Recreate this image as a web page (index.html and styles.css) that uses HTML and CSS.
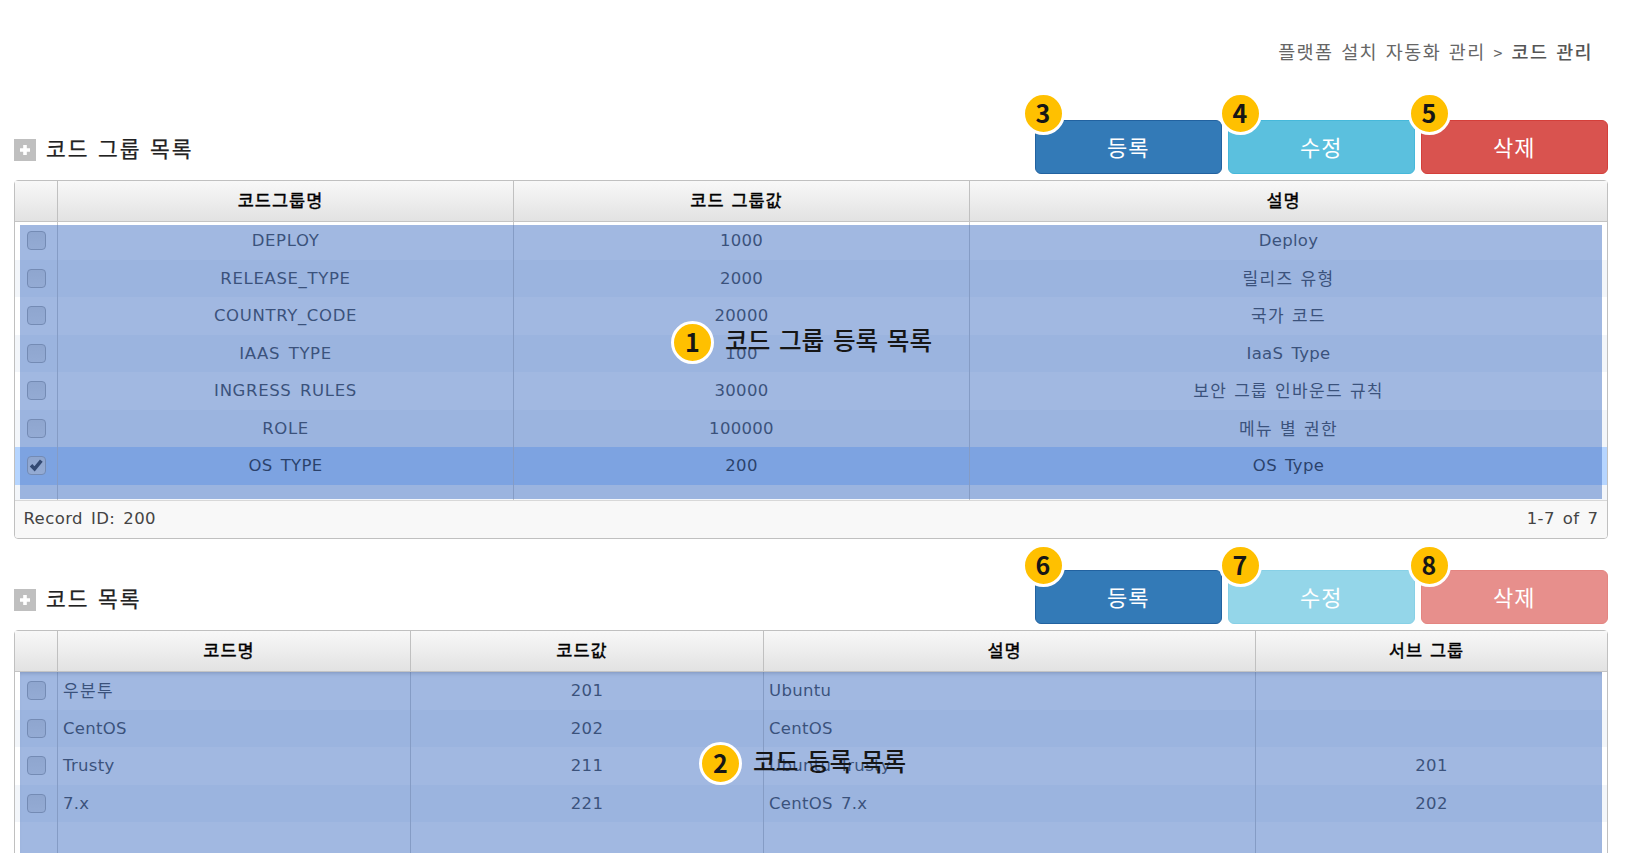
FILE: index.html
```html
<!DOCTYPE html>
<html lang="ko">
<head>
<meta charset="utf-8">
<title>코드 관리</title>
<link rel="stylesheet" href="styles.css">
</head>
<body>
<div class="page">
  <nav class="crumb">플랫폼 설치 자동화 관리 <span class="gt">&gt;</span> <b>코드 관리</b></nav>

  <section class="block">
    <header class="bar">
      <svg class="plus" viewBox="0 0 22 22"><rect width="22" height="22" fill="#bfbfbf"/><path d="M11 6v10M6 11h10" stroke="#fff" stroke-width="3.6"/></svg>
      <h2>코드 그룹 목록</h2>
      <div class="btns">
        <div class="btn blue">등록<i class="badge">3</i></div>
        <div class="btn cyan">수정<i class="badge">4</i></div>
        <div class="btn red">삭제<i class="badge">5</i></div>
      </div>
    </header>
    <div class="grid groups">
      <div class="row head"><span></span><span>코드그룹명</span><span>코드 그룹값</span><span>설명</span></div>
      <div class="body">
        <div class="row"><span><i class="check"></i></span><span class="caps">DEPLOY</span><span>1000</span><span>Deploy</span></div>
        <div class="row"><span><i class="check"></i></span><span class="caps">RELEASE_TYPE</span><span>2000</span><span class="ko">릴리즈 유형</span></div>
        <div class="row"><span><i class="check"></i></span><span class="caps">COUNTRY_CODE</span><span>20000</span><span class="ko">국가 코드</span></div>
        <div class="row"><span><i class="check"></i></span><span class="caps">IAAS TYPE</span><span>100</span><span>IaaS Type</span></div>
        <div class="row"><span><i class="check"></i></span><span class="caps">INGRESS RULES</span><span>30000</span><span class="ko">보안 그룹 인바운드 규칙</span></div>
        <div class="row"><span><i class="check"></i></span><span class="caps">ROLE</span><span>100000</span><span class="ko">메뉴 별 권한</span></div>
        <div class="row selected"><span><i class="check"><svg viewBox="0 0 18 18"><path d="M3.4 9.4l4 4L15 4.2" fill="none" stroke="#222" stroke-width="4"/></svg></i></span><span>OS TYPE</span><span>200</span><span>OS Type</span></div>
        <div class="row rest"><span></span><span></span><span></span><span></span></div>
        <div class="tint"></div>
      </div>
      <footer class="foot"><span>Record ID: 200</span><span>1-7 of 7</span></footer>
      <div class="note note-groups"><i class="badge">1</i><span>코드 그룹 등록 목록</span></div>
    </div>
  </section>

  <section class="block">
    <header class="bar">
      <svg class="plus" viewBox="0 0 22 22"><rect width="22" height="22" fill="#bfbfbf"/><path d="M11 6v10M6 11h10" stroke="#fff" stroke-width="3.6"/></svg>
      <h2>코드 목록</h2>
      <div class="btns">
        <div class="btn blue">등록<i class="badge">6</i></div>
        <div class="btn cyan off">수정<i class="badge">7</i></div>
        <div class="btn red off">삭제<i class="badge">8</i></div>
      </div>
    </header>
    <div class="grid codes">
      <div class="row head"><span></span><span>코드명</span><span>코드값</span><span>설명</span><span>서브 그룹</span></div>
      <div class="body">
        <div class="row"><span><i class="check"></i></span><span class="left ko">우분투</span><span>201</span><span class="left">Ubuntu</span><span></span></div>
        <div class="row"><span><i class="check"></i></span><span class="left">CentOS</span><span>202</span><span class="left">CentOS</span><span></span></div>
        <div class="row"><span><i class="check"></i></span><span class="left">Trusty</span><span>211</span><span class="left">Ubuntu Trusty</span><span>201</span></div>
        <div class="row"><span><i class="check"></i></span><span class="left">7.x</span><span>221</span><span class="left">CentOS 7.x</span><span>202</span></div>
        <div class="row rest"><span></span><span></span><span></span><span></span><span></span></div>
        <div class="tint"></div>
      </div>
      <div class="note note-codes"><i class="badge">2</i><span>코드 등록 목록</span></div>
    </div>
  </section>
</div>
</body>
</html>
```

FILE: styles.css
```css
* { box-sizing: border-box; }
body { margin: 0; background: #fff; }
i { font-style: normal; }

.page {
  height: 853px;
  overflow: hidden;
  padding: 35px 25px 0 14px;
  font-family: "DejaVu Sans", "Noto Sans CJK KR", sans-serif;
  font-size: 16.5px;
  color: #333;
}

.crumb {
  height: 33px;
  line-height: 32px;
  padding-right: 15px;
  text-align: right;
  font-family: "Noto Sans CJK KR", sans-serif;
  font-size: 18.5px;
  letter-spacing: 1.4px;
  word-spacing: 1.2px;
  color: #666;
}
.crumb b { font-weight: 500; color: #555; }
.gt { font-size: 16px; }

.block { height: 450px; padding-top: 52px; }
.block + .block { height: 400px; padding-top: 52px; }

.bar { display: flex; align-items: flex-start; height: 60px; }
.plus { width: 22px; height: 22px; margin-top: 19px; }
h2 {
  margin: 11px 0 0 10px;
  font: 400 21.5px/34px "Noto Sans CJK KR", sans-serif;
  letter-spacing: 2px;
  word-spacing: .4px;
  color: #222;
  -webkit-text-stroke: .25px #222;
}
.btns { display: flex; margin-left: auto; gap: 5.5px; }
.btn {
  position: relative;
  width: 187.5px;
  height: 54px;
  border: 1px solid;
  border-radius: 6px;
  color: #fff;
  text-align: center;
  font: 400 22px/50px "Noto Sans CJK KR", sans-serif;
  letter-spacing: 1px;
}
.blue { background: #337ab7; border-color: #2262a0; }
.cyan { background: #5bc0de; border-color: #46b8da; }
.red { background: #d9534f; border-color: #d43f3a; }
.cyan.off { background: #94d6e9; border-color: #87d0e6; }
.red.off { background: #e78f8c; border-color: #e48581; }

.badge {
  display: block;
  width: 43px;
  height: 43px;
  border: 3px solid #fff;
  border-radius: 50%;
  background: #ffc000;
  color: #161616;
  text-align: center;
  font: 700 25px/35px "Noto Sans CJK KR", sans-serif;
  letter-spacing: 0;
}
.btn .badge { position: absolute; left: -14px; top: -29px; }
.btn.cyan .badge { left: -10px; }
.btn.red .badge { left: -14px; }
.block + .block .btn .badge { top: -27px; }

.grid {
  position: relative;
  width: 1594px;
  border: 1.5px solid #c0c0c0;
  border-radius: 4px;
  background: #fff;
}
.groups { height: 359px; }
.codes { height: 400px; }
.row { display: grid; height: 37.5px; }
.groups .row { grid-template-columns: 43px 456px 456px 1fr; }
.codes .row { grid-template-columns: 43px 353px 353px 492px 1fr; }
.row > span {
  border-right: 1.5px solid #c6c6c6;
  text-align: center;
  line-height: 37px;
  letter-spacing: .3px;
  word-spacing: 2.6px;
  white-space: nowrap;
}
.row > .caps { letter-spacing: .65px; }
.row > span:last-child { border-right: 0; }
.row:nth-child(even) { background: #f3f6fa; }
.row.selected { background: #b6d5ff; color: #111; }
.row .left { text-align: left; padding-left: 5px; }
.row > .ko {
  font-family: "Noto Sans CJK KR", sans-serif;
  font-size: 17px;
  letter-spacing: 1.3px;
  word-spacing: 1px;
  line-height: 35px;
}
.row.head {
  height: 41px;
  background: linear-gradient(#f8f8f8, #e2e2e2);
  border-bottom: 1.5px solid #c4c4c4;
}
.head > span {
  padding-right: 10px;
  border-color: #c0c0c0;
  color: #000;
  font: 400 17.5px/37px "Noto Sans CJK KR", sans-serif;
  -webkit-text-stroke: .4px #000;
  letter-spacing: 1px;
  word-spacing: 1px;
}
.head > span:first-child { padding: 0; }

.body { position: relative; overflow: hidden; }
.groups .body { height: 278px; }
.codes .body { height: 350px; }
.row.rest { height: 200px; }
.tint {
  position: absolute;
  inset: 3px 5px 1px 5px;
  background: rgba(68, 114, 196, .5);
}
.codes .tint { top: 0; box-shadow: inset 0 4px 4px -3px rgba(60, 80, 120, .35); }

.check {
  display: block;
  width: 18.5px;
  height: 19px;
  margin: 9px 0 0 12px;
  border: 1.5px solid #a4a4a4;
  border-radius: 4px;
  background: linear-gradient(#dadada, #e4e4e4);
  color: #222;
}
.check svg { display: block; width: 16px; height: 16px; }

.foot {
  display: flex;
  justify-content: space-between;
  height: 37.5px;
  padding: 0 8.5px;
  border-top: 1.5px solid #d8d8d8;
  border-radius: 0 0 3px 3px;
  background: #f8f8f8;
  line-height: 35px;
  letter-spacing: .4px;
  word-spacing: 2.4px;
  color: #444;
}

.note {
  position: absolute;
  display: flex;
  align-items: center;
  gap: 11px;
  white-space: nowrap;
  color: #161616;
  font: 500 24.6px/44px "Noto Sans CJK KR", sans-serif;
  word-spacing: 1.8px;
}
.note > span { position: relative; top: -3px; }
.note-groups { left: 656px; top: 139px; }
.note-codes { left: 684px; top: 110px; }
```
